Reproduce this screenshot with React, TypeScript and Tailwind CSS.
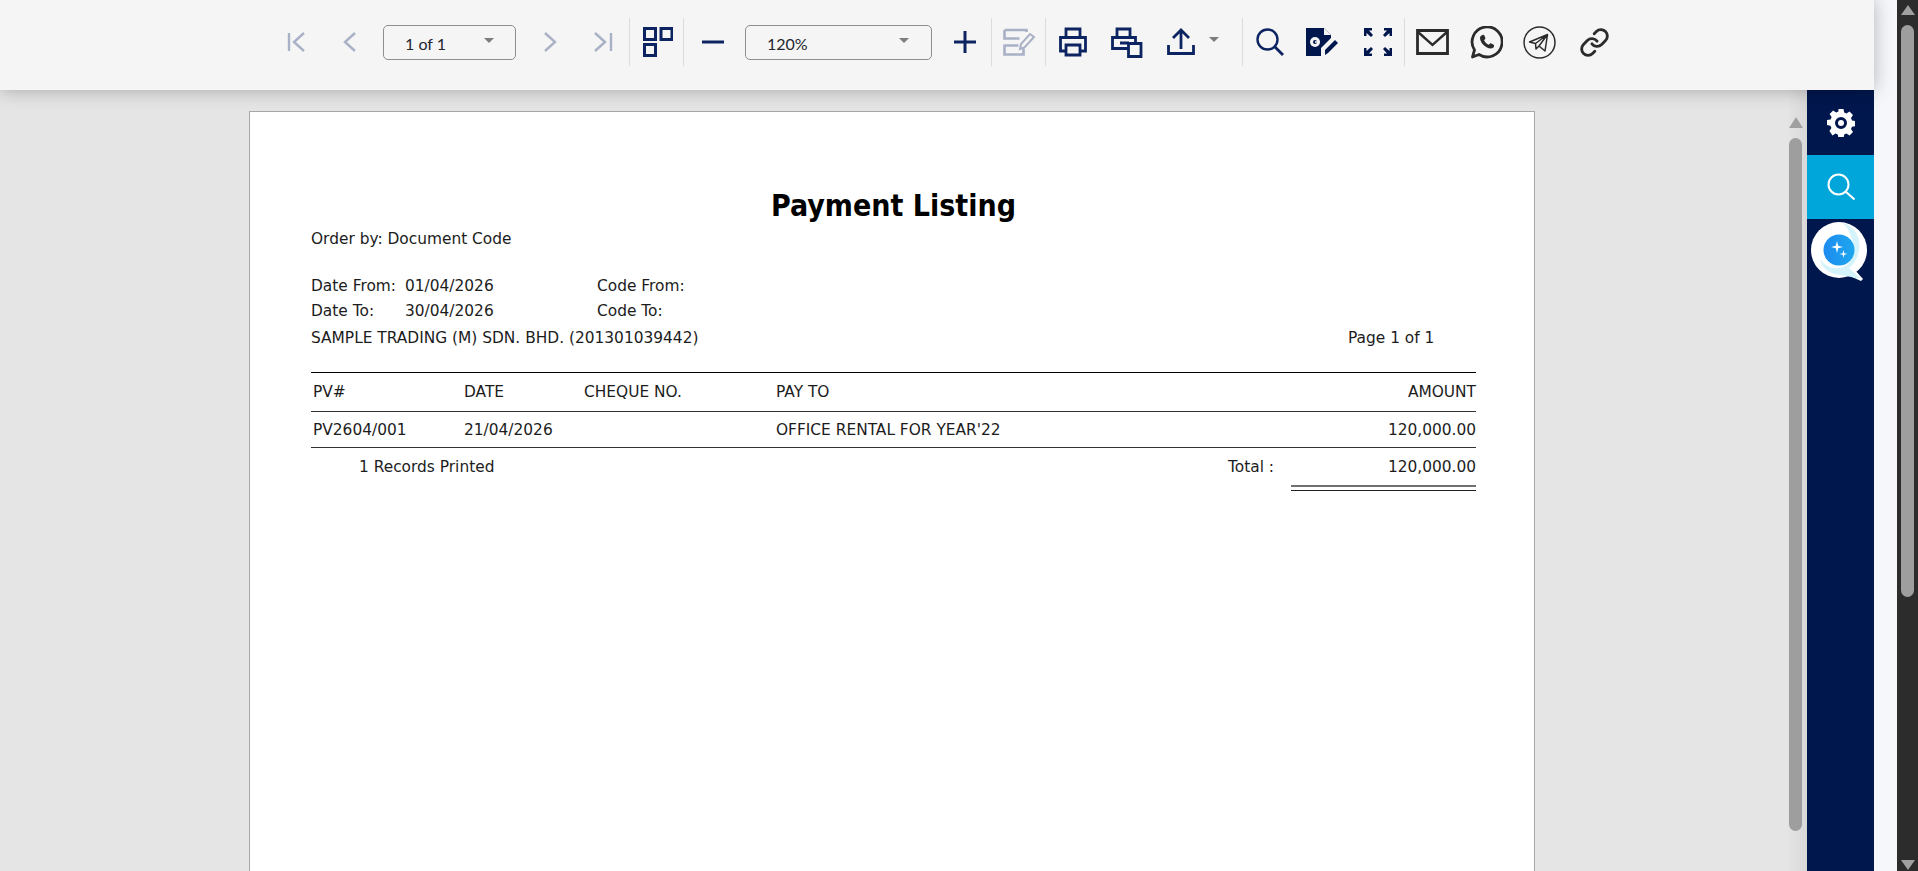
import React from 'react';
import { Link } from 'lucide-react';

const NAVY = '#0c2461';
const GREY = '#a9b1c6';

const Svg = ({ w = 32, h = 32, children }: { w?: number; h?: number; children: React.ReactNode }) => (
  <svg width={w} height={h} viewBox={`0 0 ${w} ${h}`} fill="none" strokeLinecap="butt">
    {children}
  </svg>
);

const Slot = ({ className, children }: { className: string; children?: React.ReactNode }) => (
  <div className={`flex h-full shrink-0 items-center justify-center ${className}`}>{children}</div>
);

const Sep = () => <div className="h-[48px] w-px shrink-0 bg-[#dcdcdc]" />;

const Caret = () => (
  <svg width="10" height="5" viewBox="0 0 10 5">
    <path d="M0 0h10L5 5z" fill="#7d7d7d" />
  </svg>
);

const Select = ({ value, className, caretClass }: { value: string; className: string; caretClass: string }) => (
  <div className={`flex h-[35px] shrink-0 items-center justify-between rounded-[5px] border border-[#8e8e8e] ${className}`}>
    <span className="ml-[21px] pt-[3px] font-['Lato',sans-serif] text-[16px] leading-none text-[#23262e]">{value}</span>
    <span className={caretClass}>
      <Caret />
    </span>
  </div>
);

const DocText = ({ className = '', children }: { className?: string; children?: React.ReactNode }) => (
  <span className={`whitespace-pre ${className}`}>{children}</span>
);

export default function App() {
  return (
    <div className="flex h-[871px] w-full overflow-hidden bg-[#e5e5e5]">
      <div className="flex min-w-0 flex-1 flex-col">
        {/* toolbar */}
        <div className="relative z-10 flex h-[90px] shrink-0 items-center bg-[#f5f5f5] pb-[6px] pl-[270px] shadow-[0_0_18px_rgba(0,0,0,0.28)]">
          <div className="flex h-[48px] items-center">
            <Slot className="w-[54px]">
              <Svg w={20} h={20}>
                <path d="M2 1v18M17 1 7 10l10 9" stroke={GREY} strokeWidth="2.4" />
              </Svg>
            </Slot>
            <Slot className="w-[52px]">
              <Svg w={14} h={20}>
                <path d="M12 1 2 10l10 9" stroke={GREY} strokeWidth="2.4" />
              </Svg>
            </Slot>
            <Select value="1 of 1" className="ml-[7px] w-[133px]" caretClass="mr-[21px] -mt-[4px]" />
            <Slot className="w-[68px]">
              <Svg w={14} h={20}>
                <path d="m2 1 10 9-10 9" stroke={GREY} strokeWidth="2.4" />
              </Svg>
            </Slot>
            <Slot className="w-[38px]">
              <Svg w={20} h={20}>
                <path d="m2 1 10 9-10 9M18 1v18" stroke={GREY} strokeWidth="2.4" />
              </Svg>
            </Slot>
            <div className="w-[7px]" />
            <Sep />
            <Slot className="w-[53px] pl-[3px]">
              <Svg w={30} h={30}>
                <path d="M1.5 1.5h11v11h-11zM18 1.5h11v11H18zM1.5 17.5h11v11h-11z" stroke={NAVY} strokeWidth="3" />
              </Svg>
            </Slot>
            <Sep />
            <Slot className="w-[58px]">
              <Svg w={22} h={4}>
                <path d="M0 2h22" stroke={NAVY} strokeWidth="3" />
              </Svg>
            </Slot>
            <Select value="120%" className="ml-[3px] w-[187px]" caretClass="mr-[22px] -mt-[4px]" />
            <Slot className="w-[59px] pl-[7px]">
              <Svg w={22} h={22}>
                <path d="M0 11h22M11 0v22" stroke={NAVY} strokeWidth="3" />
              </Svg>
            </Slot>
            <Sep />
            <Slot className="w-[53px]">
              <Svg w={32} h={28}>
                <path d="M1.5 2h22v2M1.5 2v8.500h15M1.5 17.500h14M1.500 16.500v10h19v-6" stroke={GREY} strokeWidth="2.6" />
                <path d="m17 21 1-5L27 6l4 3-9.500 10.500z" stroke={GREY} strokeWidth="2" />
              </Svg>
            </Slot>
            <Sep />
            <Slot className="w-[54px]">
              <Svg w={28} h={30}>
                <path d="M7 10V2h14v8M7 24H1.500V10.500h25V24H21M7 18h14v10H7z" stroke={NAVY} strokeWidth="2.800" />
              </Svg>
            </Slot>
            <Slot className="w-[50px] pl-[4px]">
              <Svg w={32} h={31}>
                <path d="M6 10V2h13v8M1.500 10.500h23v11h-23zM9 16h9" stroke={NAVY} strokeWidth="2.800" />
                <path d="M17.500 16.500h12.500v13H17.500z" stroke={NAVY} strokeWidth="2.800" fill="#f5f5f5" />
              </Svg>
            </Slot>
            <Slot className="w-[60px] pl-[2px]">
              <Svg w={28} h={28}>
                <path d="M14 21V3M6 10l8-8 8 8M1.500 17v8.500h25V17" stroke={NAVY} strokeWidth="2.800" />
              </Svg>
            </Slot>
            <Slot className="w-[8px]">
              <span className="-mt-[6px]">
                <Caret />
              </span>
            </Slot>
            <div className="w-[24px]" />
            <Sep />
            <Slot className="w-[54px]">
              <Svg w={28} h={28}>
                <circle cx="11.500" cy="11.500" r="10" stroke={NAVY} strokeWidth="2.400" />
                <path d="m18.500 18.500 8.500 8.500" stroke={NAVY} strokeWidth="2.800" />
              </Svg>
            </Slot>
            <Slot className="w-[46px] pl-[4px]">
              <Svg w={33} h={28}>
                <path d="M0 0h18l7 7v3L15 20v8H0z" fill="#00174d" />
                <path d="M18 0v7h7z" fill="#f5f5f5" />
                <circle cx="9" cy="14" r="5" fill="#f5f5f5" />
                <circle cx="9" cy="14" r="2" fill="#00174d" />
                <path d="M9 14h5" stroke="#f5f5f5" strokeWidth="1.500" />
                <path d="m19 27 0-5L29 12l3 3-10 10z" fill="#00174d" />
                <path d="M20 0h3l5 5-2 2z" fill="#f5f5f5" />
              </Svg>
            </Slot>
            <Slot className="w-[61px] pl-[9px]">
              <Svg w={28} h={28}>
                <path d="M0 0h8v2.500H5L9 7 7 9 2.500 5v3H0zM28 0h-8v2.500h3L19 7l2 2 4.500-4v3H28zM0 28h8v-2.500H5L9 21l-2-2-4.500 4v-3H0zM28 28h-8v-2.500h3L19 21l2-2 4.500 4v-3H28z" fill="#00174d" />
              </Svg>
            </Slot>
            <Sep />
            <Slot className="w-[54px]">
              <Svg w={33} h={26}>
                <path d="M1.500 1.500h30v23h-30z" stroke="#2b2b2b" strokeWidth="2.800" />
                <path d="m2 3 14.500 13L31 3" stroke="#2b2b2b" strokeWidth="2.400" />
              </Svg>
            </Slot>
            <Slot className="w-[54px]">
              <Svg w={33} h={33}>
                <path d="M2.500 31 4.500 24A15 15 0 1 1 9 28.500z" stroke="#2b2b2b" strokeWidth="2.800" strokeLinejoin="round" />
                <path d="M11.500 9.500c1-1 2.500-1 3 .2l.8 2c.2.600 0 1-.4 1.500l-.8 1c1 2 2.500 3.500 4.700 4.500l1-1c.5-.4 1-.5 1.500-.3l2 1c1 .5 1 2 .2 3-1.500 1.500-4 1.500-7-.2-3-1.700-5-4-6-6.700-.8-2.500-.7-4 .999-5z" fill="#2b2b2b" />
              </Svg>
            </Slot>
            <Slot className="w-[52px]">
              <Svg w={33} h={33}>
                <circle cx="16.500" cy="16.500" r="15.500" stroke="#2b2b2b" strokeWidth="1.500" />
                <path d="M6.500 16 24.500 8.500 22 25l-6-5-3 3-.5-5.500zM12.500 17.500 24.500 8.500 16 20" stroke="#2b2b2b" strokeWidth="1.500" strokeLinejoin="round" />
              </Svg>
            </Slot>
            <Slot className="w-[58px]">
              <Link size={31} strokeWidth={2.2} color="#2b2b2b" />
            </Slot>
          </div>
        </div>

        <div className="flex min-h-0 flex-1">
          {/* report page */}
          <div className="min-w-0 flex-1 overflow-hidden pl-[249px] pt-[21px]">
            <div className="h-[1000px] w-[1286px] border border-[#a6a6a6] bg-white pl-[61px] pt-[76px] font-['DejaVu_Sans',sans-serif] text-[15.4px] leading-[20px] text-[#1c1c1c]">
              <div className="w-[1165px]">
                <h1 className="text-center font-['DejaVu_Sans_Condensed','DejaVu_Sans',sans-serif] text-[30px] font-bold leading-[36px] text-black">Payment Listing</h1>
                <div className="mt-[5px]">Order by: Document Code</div>
                <div className="mt-[27px] flex">
                  <DocText className="w-[94px]">Date From:</DocText>
                  <DocText className="w-[192px]">01/04/2026</DocText>
                  <DocText>Code From:</DocText>
                </div>
                <div className="mt-[5px] flex">
                  <DocText className="w-[94px]">Date To:</DocText>
                  <DocText className="w-[192px]">30/04/2026</DocText>
                  <DocText>Code To:</DocText>
                </div>
                <div className="mt-[7px] flex">
                  <DocText className="w-[1037px]">SAMPLE TRADING (M) SDN. BHD. (201301039442)</DocText>
                  <DocText>Page 1 of 1</DocText>
                </div>
                <div className="mt-[24px] border-t border-black" />
                <div className="flex h-[38px] items-center pl-[2px]">
                  <DocText className="w-[151px]">PV#</DocText>
                  <DocText className="w-[120px]">DATE</DocText>
                  <DocText className="w-[192px]">CHEQUE NO.</DocText>
                  <DocText className="flex-1">PAY TO</DocText>
                  <DocText>AMOUNT</DocText>
                </div>
                <div className="border-t border-[#333]" />
                <div className="flex h-[35px] items-center pl-[2px]">
                  <DocText className="w-[151px]">PV2604/001</DocText>
                  <DocText className="w-[120px]">21/04/2026</DocText>
                  <DocText className="w-[192px]" />
                  <DocText className="flex-1">OFFICE RENTAL FOR YEAR'22</DocText>
                  <DocText>120,000.00</DocText>
                </div>
                <div className="border-t border-[#333]" />
                <div className="flex h-[37px] items-center pl-[48px]">
                  <DocText className="flex-1">1 Records Printed</DocText>
                  <DocText className="w-[63px]">Total :</DocText>
                  <DocText className="w-[185px] text-right">120,000.00</DocText>
                </div>
                <div className="ml-auto w-[185px] border-t-2 border-[#707070]" />
                <div className="ml-auto mt-[3px] w-[185px] border-t border-[#222]" />
              </div>
            </div>
          </div>

          {/* inner scrollbar */}
          <div className="flex w-[20px] shrink-0 flex-col items-center bg-gradient-to-r from-[#e5e5e5] to-[#d8d8d8] pr-[3px] pt-[27px]">
            <div className="h-0 w-0 border-x-[7px] border-b-[11px] border-x-transparent border-b-[#a0a0a0]" />
            <div className="mt-[10px] h-[693px] w-[13px] rounded-full bg-[#9e9e9e]" />
          </div>

          {/* side rail */}
          <div className="flex w-[67px] shrink-0 flex-col items-stretch bg-[#00174d]">
            <div className="flex h-[65px] items-center justify-center">
              <svg width="28" height="28" viewBox="0 0 28 28">
                <path
                  fill="#fff"
                  fillRule="evenodd"
                  d="M11.500 0h5l.7 3.600 2.300 1 3-2 3.500 3.500-2 3 1 2.300 3.600.7v5l-3.600.7-1 2.300 2 3-3.500 3.500-3-2-2.300 1-.7 3.600h-5l-.7-3.600-2.300-1-3 2L2.400 22.100l2-3-1-2.300-3.400-.7v-5l3.600-.7 1-2.300-2-3L6.100 1.600l3 2 2.300-1zM14 8a6 6 0 1 0 0 12 6 6 0 0 0 0-12z"
                />
                <circle cx="14" cy="14" r="3" fill="#fff" />
              </svg>
            </div>
            <div className="flex h-[64px] items-center justify-center bg-[#00a5d9]">
              <svg width="28" height="28" viewBox="0 0 28 28" fill="none">
                <circle cx="11.500" cy="11.500" r="10" stroke="#fff" strokeWidth="2" />
                <path d="m18.500 18.500 9 8" stroke="#fff" strokeWidth="2.200" />
              </svg>
            </div>
            <div className="flex justify-center pr-[3px] pt-[3px]">
              <svg width="56" height="60" viewBox="0 0 56 60">
                <defs>
                  <linearGradient id="qBlue" x1="0" x2="1" y1="0" y2="0">
                    <stop offset="0" stopColor="#1c8bf0" />
                    <stop offset="1" stopColor="#1fa7ee" />
                  </linearGradient>
                </defs>
                <circle cx="28" cy="28" r="28" fill="#fff" />
                <path d="M30 50 50 59l2-2-9-10z" fill="#fff" />
                <path d="M32 1C44 4 50 16 48 28c-1 8-5 14-10 18l12 11-20-4C18 52 10 46 9 36c4 10 20 14 28 6 9-9 6-30-5-41z" fill="#d4f3fb" />
                <circle cx="28" cy="28" r="15.500" fill="url(#qBlue)" />
                <path d="M26 19 27.200 23.800 32 25 27.200 26.200 26 31 24.800 26.200 20 25 24.800 23.800z" fill="#fff" />
                <path d="M32.500 28 33.300 31.200 36.500 32 33.300 32.800 32.500 36 31.700 32.800 28.500 32 31.700 31.200z" fill="#fff" />
              </svg>
            </div>
          </div>
        </div>
      </div>

      {/* browser edge */}
      <div className="w-[23px] shrink-0 bg-[#f5f7fb]" />
      <div className="relative flex w-[21px] shrink-0 flex-col items-center bg-[#2c2c2c] pt-[5px]">
        <div className="h-0 w-0 border-x-[7px] border-b-[10px] border-x-transparent border-b-[#a0a0a0]" />
        <div className="mt-[10px] h-[572px] w-[13px] rounded-full bg-[#9e9e9e]" />
        <div className="mb-[1px] mt-auto h-0 w-0 border-x-[7px] border-t-[10px] border-x-transparent border-t-[#a0a0a0]" />
      </div>
    </div>
  );
}
